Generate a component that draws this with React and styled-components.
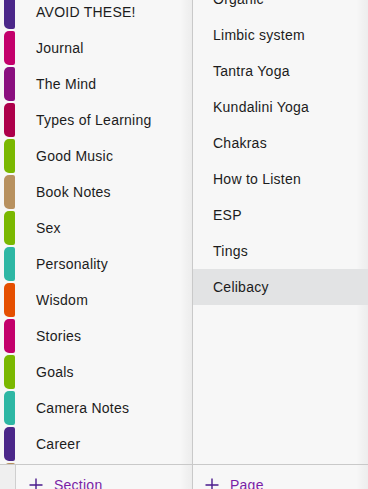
import React from "react";
import styled, { createGlobalStyle } from "styled-components";

const Global = createGlobalStyle`
  html, body { margin: 0; padding: 0; background: #f7f7f7; }
  body { font-family: "Liberation Sans", Arial, sans-serif; }
  #root { width: 368px; height: 489px; overflow: hidden; }
`;

const Shell = styled.div`
  display: flex;
  width: 368px;
  height: 489px;
  background: #f7f7f7;
  overflow: hidden;
`;

const Pane = styled.div`
  display: flex;
  flex-direction: column;
  width: ${(p) => p.$width}px;
  flex: none;
  border-left: ${(p) => (p.$divider ? "1px solid #c9c9c9" : "none")};
  background: linear-gradient(to left, rgba(0, 0, 0, 0.045), rgba(0, 0, 0, 0) 12px), #f7f7f7;
`;

const Scroll = styled.div`
  flex: none;
  height: 464px;
  overflow: hidden;
`;

const List = styled.div`
  display: flex;
  flex-direction: column;
  margin-top: ${(p) => p.$offset}px;
`;

const SectionRow = styled.div`
  display: flex;
  align-items: stretch;
  height: 36px;
`;

const Tab = styled.div`
  flex: none;
  width: 11px;
  margin: 1px 0 1px 4px;
  background: ${(p) => p.$color};
  border-radius: 5px 2px 2px 5px;
`;

const Label = styled.div`
  display: flex;
  align-items: center;
  padding-left: ${(p) => p.$indent}px;
  font-size: 14px;
  letter-spacing: 0.25px;
  color: #1c1c1c;
  white-space: nowrap;
`;

const PageRow = styled.div`
  display: flex;
  align-items: center;
  height: 36px;
  padding-left: 20px;
  font-size: 14px;
  letter-spacing: 0.25px;
  color: #1c1c1c;
  background: ${(p) => (p.$selected ? "#e2e3e4" : "transparent")};
`;

const Footer = styled.div`
  display: flex;
  align-items: flex-start;
  flex: none;
  height: 40px;
  border-top: 1px solid #c9c9c9;
`;

const Strip = styled.div`
  flex: none;
  width: 15px;
  align-self: stretch;
  background: #efefef;
  border-right: 1px solid #cfcfcf;
`;

const AddButton = styled.div`
  display: flex;
  align-items: center;
  gap: 11px;
  margin: 12px 0 0 ${(p) => p.$indent}px;
  font-size: 14px;
  letter-spacing: 0.25px;
  color: #7a1ea6;
`;

const Plus = () => (
  <svg width="14" height="14" viewBox="0 0 14 14">
    <path d="M7 0.5V13.5M0.5 7H13.5" stroke="#4a1a8c" strokeWidth="1.4" fill="none" />
  </svg>
);

const sections = [
  ["AVOID THESE!", "#4b2789"],
  ["Journal", "#c3006b"],
  ["The Mind", "#8a0f7f"],
  ["Types of Learning", "#ad004a"],
  ["Good Music", "#7ab800"],
  ["Book Notes", "#b8915f"],
  ["Sex", "#7ab800"],
  ["Personality", "#2eb7a4"],
  ["Wisdom", "#e54f00"],
  ["Stories", "#c3006b"],
  ["Goals", "#7ab800"],
  ["Camera Notes", "#2eb7a4"],
  ["Career", "#4b2789"],
  ["", "#b8915f"],
];

const pages = [
  "Organic",
  "Limbic system",
  "Tantra Yoga",
  "Kundalini Yoga",
  "Chakras",
  "How to Listen",
  "ESP",
  "Tings",
  "Celibacy",
];

export default function App() {
  return (
    <>
      <Global />
      <Shell>
        <Pane $width={192}>
          <Scroll>
            <List $offset={-6}>
              {sections.map(([name, color], i) => (
                <SectionRow key={i}>
                  <Tab $color={color} />
                  <Label $indent={21}>{name}</Label>
                </SectionRow>
              ))}
            </List>
          </Scroll>
          <Footer>
            <Strip />
            <AddButton $indent={13}>
              <Plus />
              Section
            </AddButton>
          </Footer>
        </Pane>
        <Pane $width={175} $divider>
          <Scroll>
            <List $offset={-19}>
              {pages.map((p) => (
                <PageRow key={p} $selected={p === "Celibacy"}>
                  {p}
                </PageRow>
              ))}
            </List>
          </Scroll>
          <Footer>
            <AddButton $indent={12}>
              <Plus />
              Page
            </AddButton>
          </Footer>
        </Pane>
      </Shell>
    </>
  );
}
